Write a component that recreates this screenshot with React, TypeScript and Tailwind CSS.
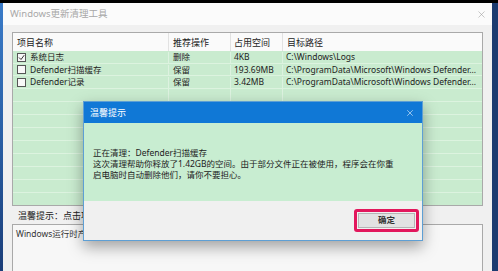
import { X } from 'lucide-react';

const rows = [
  { checked: true, name: '系统日志', op: '删除', size: '4KB', path: 'C:\\Windows\\Logs' },
  { checked: false, name: 'Defender扫描缓存', op: '保留', size: '193.69MB', path: 'C:\\ProgramData\\Microsoft\\Windows Defender...' },
  { checked: false, name: 'Defender记录', op: '保留', size: '3.42MB', path: 'C:\\ProgramData\\Microsoft\\Windows Defender...' },
];

const font = { fontFamily: '"Noto Sans", "Noto Sans CJK SC", sans-serif' };

function Checkbox({ checked }: { checked: boolean }) {
  return (
    <div className="w-[9px] h-[9px] border border-[#555] bg-[#f8f8f8] flex items-center justify-center shrink-0">
      {checked && (
        <svg width="7" height="7" viewBox="0 0 7 7">
          <path d="M1 3.5 L3 5.5 L6.2 1.2" stroke="#333" strokeWidth="1" fill="none" />
        </svg>
      )}
    </div>
  );
}

export default function App() {
  const empty = Array.from({ length: 9 });

  return (
    <div className="w-[498px] h-[271px] overflow-hidden bg-black flex flex-col text-[#222]" style={font}>
      <div className="h-[3px] shrink-0" />
      <div className="flex flex-1 min-h-0">
        <div className="w-[3px] bg-gradient-to-b from-[#3a7bc8] via-[#2a5fa5] to-[#1a3d78]" />

        <div className="flex-1 relative flex flex-col bg-[#f0f0f0]">
          {/* title bar */}
          <div className="h-[22px] bg-[#fbfbfb] flex items-center justify-between px-[7px] shrink-0">
            <span className="text-[9.5px] text-[#a8a8a8] leading-none">Windows更新清理工具</span>
            <X size={11} strokeWidth={1.2} className="text-[#9a9a9a] mr-[-2px]" />
          </div>

          <div className="flex-1 flex flex-col pl-[9px] pr-[7px] pt-[7px]">
            {/* table */}
            <div className="w-[471px] h-[174px] border border-[#a9a9a9] bg-[#c9ebcf] flex flex-col text-[8.5px] leading-none overflow-hidden">
              <div className="h-[18px] bg-[#fafafa] flex items-center shrink-0 text-[9px]">
                <div className="w-[156px] h-full flex items-center pl-[4px] border-r border-[#e2e2e2]">项目名称</div>
                <div className="w-[62px] h-full flex items-center pl-[4px] border-r border-[#e2e2e2]">推荐操作</div>
                <div className="w-[52px] h-full flex items-center pl-[3px] border-r border-[#e2e2e2]">占用空间</div>
                <div className="flex-1 h-full flex items-center pl-[4px]">目标路径</div>
              </div>
              {rows.map((r) => (
                <div key={r.name} className="h-[12.5px] flex items-center border-b border-[#dcf3df] shrink-0 pt-[1px]">
                  <div className="w-[156px] flex items-center gap-[4px] pl-[4px] border-r border-[#ddf2e0] h-full">
                    <Checkbox checked={r.checked} />
                    <span>{r.name}</span>
                  </div>
                  <div className="w-[62px] pl-[4px] h-full flex items-center border-r border-[#ddf2e0]">{r.op}</div>
                  <div className="w-[52px] pl-[3px] h-full flex items-center border-r border-[#ddf2e0]">{r.size}</div>
                  <div className="flex-1 pl-[3px] h-full flex items-center">{r.path}</div>
                </div>
              ))}
              {empty.map((_, i) => (
                <div key={i} className="h-[13px] flex border-b border-[#dcf3df] shrink-0">
                  <div className="w-[156px] border-r border-[#ddf2e0]" />
                  <div className="w-[62px] border-r border-[#ddf2e0]" />
                  <div className="w-[52px] border-r border-[#ddf2e0]" />
                  <div className="flex-1" />
                </div>
              ))}
            </div>

            <div className="h-[18px] flex items-center pl-[6px] text-[9px] leading-none shrink-0">
              温馨提示：点击项目名称前的复选框可以选择要清理的项目
            </div>

            <div className="w-[471px] flex-1 border border-[#a9a9a9] border-b-0 bg-[#f7f7f7] pt-[3px] pl-[3px] text-[8.5px] leading-[11px] text-[#333]">
              Windows运行时产生的日志和缓存文件会占用磁盘空间
            </div>
          </div>

          {/* dialog */}
          <div className="absolute left-[80px] top-[98px] w-[340px] h-[140px] flex flex-col border border-[#5e9fd4] shadow-[0_6px_14px_rgba(0,0,0,0.35)]">
            <div className="h-[21px] bg-[#1078d6] flex items-center justify-between pl-[6px] pr-[7px] shrink-0">
              <span className="text-white text-[9px] leading-none">温馨提示</span>
              <X size={10} strokeWidth={1.3} className="text-white" />
            </div>
            <div className="h-[78px] bg-[#c8edd1] pl-[9px] pt-[24px] text-[8.5px] leading-[11px] text-[#222] shrink-0">
              <div>正在清理：Defender扫描缓存</div>
              <div>这次清理帮助你释放了1.42GB的空间。由于部分文件正在被使用，程序会在你重</div>
              <div>启电脑时自动删除他们，请你不要担心。</div>
            </div>
            <div className="flex-1 bg-[#f0f0f0] flex justify-end items-start pt-[8px] pr-[3px]">
              <div className="w-[65px] h-[23px] border-[3px] border-[#e2175c] rounded-[3px] p-[1px] flex">
                <div className="flex-1 bg-[#e2e2e2] border border-[#b5b5b5] flex items-center justify-center text-[8.5px] leading-none font-semibold text-[#333]">
                  确定
                </div>
              </div>
            </div>
          </div>
        </div>

        <div className="w-[6px] bg-[#1c3b70]" />
      </div>
    </div>
  );
}
